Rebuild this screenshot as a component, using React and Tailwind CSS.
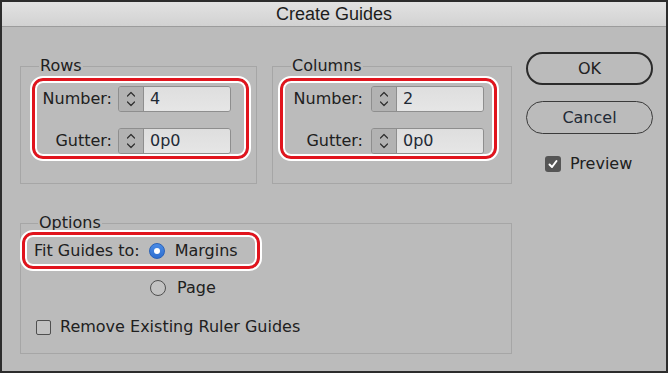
import React from "react";

function Chevrons() {
  return (
    <svg width="12" height="18" viewBox="0 0 12 18" fill="none" stroke="#2f2f2f" strokeWidth="1.2" strokeLinecap="round" strokeLinejoin="round">
      <path d="M2.5 6 L6 2.5 L9.5 6" />
      <path d="M2.5 12 L6 15.5 L9.5 12" />
    </svg>
  );
}

function Spinner({ value, fieldW }) {
  return (
    <div className="flex h-[26px] rounded-[3px] border border-[#8e8e8e] overflow-hidden">
      <div className="w-[25px] flex items-center justify-center bg-[#b2b2b2] border-r border-[#8e8e8e]">
        <Chevrons />
      </div>
      <div className={`${fieldW} flex items-center pl-[6px] bg-gradient-to-b from-[#dedede] to-[#e6e6e6] text-[#1f2a36]`}>
        {value}
      </div>
    </div>
  );
}

function HighlightBox({ className, children }) {
  return (
    <div
      className={`rounded-[11px] border-[3px] border-[#e1141d] outline-2 outline-white shadow-[inset_0_0_0_2px_#ffffff] ${className}`}
    >
      {children}
    </div>
  );
}

export default function App() {
  return (
    <div className="w-[668px] h-[373px] border-2 border-[#2c2c2c] bg-[#bbbbbb] flex flex-col font-['DejaVu_Sans',sans-serif] text-[16px] leading-[20px] text-[#202020] overflow-hidden">
      <div className="h-[25px] shrink-0 flex items-center justify-center bg-gradient-to-b from-[#e2e2e2] to-[#d2d2d2] border-b border-[#9c9c9c] font-['Liberation_Sans',sans-serif] text-[18px] leading-[22px] text-[#1d1d1d]">
        Create Guides
      </div>
      <div className="flex flex-col pl-[18px]">
        <div className="flex items-start pt-[25px]">
          {/* Rows */}
          <fieldset className="mt-[4px] w-[237px] h-[128px] border border-[#a6a6a6]">
            <legend className="ml-[18px] px-[1px] leading-[20px]">Rows</legend>
            <HighlightBox className="ml-[11px] mt-[2px] w-[217px] flex flex-col pt-[5px] pb-[2px] gap-[16px]">
              <div className="flex items-center">
                <div className="w-[77px] text-right">Number:</div>
                <div className="ml-[6px]"><Spinner value="4" fieldW="w-[86px]" /></div>
              </div>
              <div className="flex items-center">
                <div className="w-[77px] text-right">Gutter:</div>
                <div className="ml-[6px]"><Spinner value="0p0" fieldW="w-[86px]" /></div>
              </div>
            </HighlightBox>
          </fieldset>

          {/* Columns */}
          <fieldset className="mt-[4px] ml-[15px] w-[240px] h-[128px] border border-[#a6a6a6]">
            <legend className="ml-[18px] px-[1px] leading-[20px]">Columns</legend>
            <HighlightBox className="ml-[7px] mt-[2px] w-[217px] flex flex-col pt-[5px] pb-[2px] gap-[16px]">
              <div className="flex items-center">
                <div className="w-[80px] text-right">Number:</div>
                <div className="ml-[8px]"><Spinner value="2" fieldW="w-[86px]" /></div>
              </div>
              <div className="flex items-center">
                <div className="w-[80px] text-right">Gutter:</div>
                <div className="ml-[8px]"><Spinner value="0p0" fieldW="w-[86px]" /></div>
              </div>
            </HighlightBox>
          </fieldset>

          {/* Buttons */}
          <div className="ml-[14px] w-[127px] flex flex-col">
            <div className="h-[33px] rounded-full border-2 border-[#2b2b2b] flex items-center justify-center text-[#222]">
              OK
            </div>
            <div className="mt-[16px] h-[33px] rounded-full border-[1.5px] border-[#3a3a3a] flex items-center justify-center text-[#1f2a36]">
              Cancel
            </div>
            <div className="mt-[20px] ml-[19px] flex items-center h-[20px]">
              <div className="w-[16px] h-[16px] rounded-[3px] bg-[#555555] flex items-center justify-center">
                <svg width="12" height="12" viewBox="0 0 12 12" fill="none" stroke="#ffffff" strokeWidth="2" strokeLinecap="round" strokeLinejoin="round">
                  <path d="M2.5 6.5 L5 9 L9.5 3" />
                </svg>
              </div>
              <span className="ml-[9px]">Preview</span>
            </div>
          </div>
        </div>

        {/* Options */}
        <fieldset className="mt-[29px] w-[492px] h-[141px] border border-[#a6a6a6]">
          <legend className="ml-[17px] px-[1px] leading-[20px]">Options</legend>
          <HighlightBox className="ml-[1px] -mt-[1px] w-[238px] h-[37px] flex items-center pl-[9px]">
            <span>Fit Guides to:</span>
            <div className="ml-[9px] w-[16px] h-[16px] rounded-full bg-gradient-to-b from-[#4a8be6] to-[#2e6fd0] border border-[#2a62b8] flex items-center justify-center">
              <div className="w-[6px] h-[6px] rounded-full bg-white" />
            </div>
            <span className="ml-[10px]">Margins</span>
          </HighlightBox>
          <div className="mt-[9px] ml-[129px] flex items-center h-[20px]">
            <div className="w-[16px] h-[16px] rounded-full border-[1.5px] border-[#4f4f4f] bg-[#c2c2c2]" />
            <span className="ml-[11px]">Page</span>
          </div>
          <div className="mt-[19px] ml-[15px] flex items-center h-[20px]">
            <div className="w-[15px] h-[15px] rounded-[2px] border-[1.5px] border-[#4f4f4f] bg-[#c2c2c2]" />
            <span className="ml-[9px]">Remove Existing Ruler Guides</span>
          </div>
        </fieldset>
      </div>
    </div>
  );
}
